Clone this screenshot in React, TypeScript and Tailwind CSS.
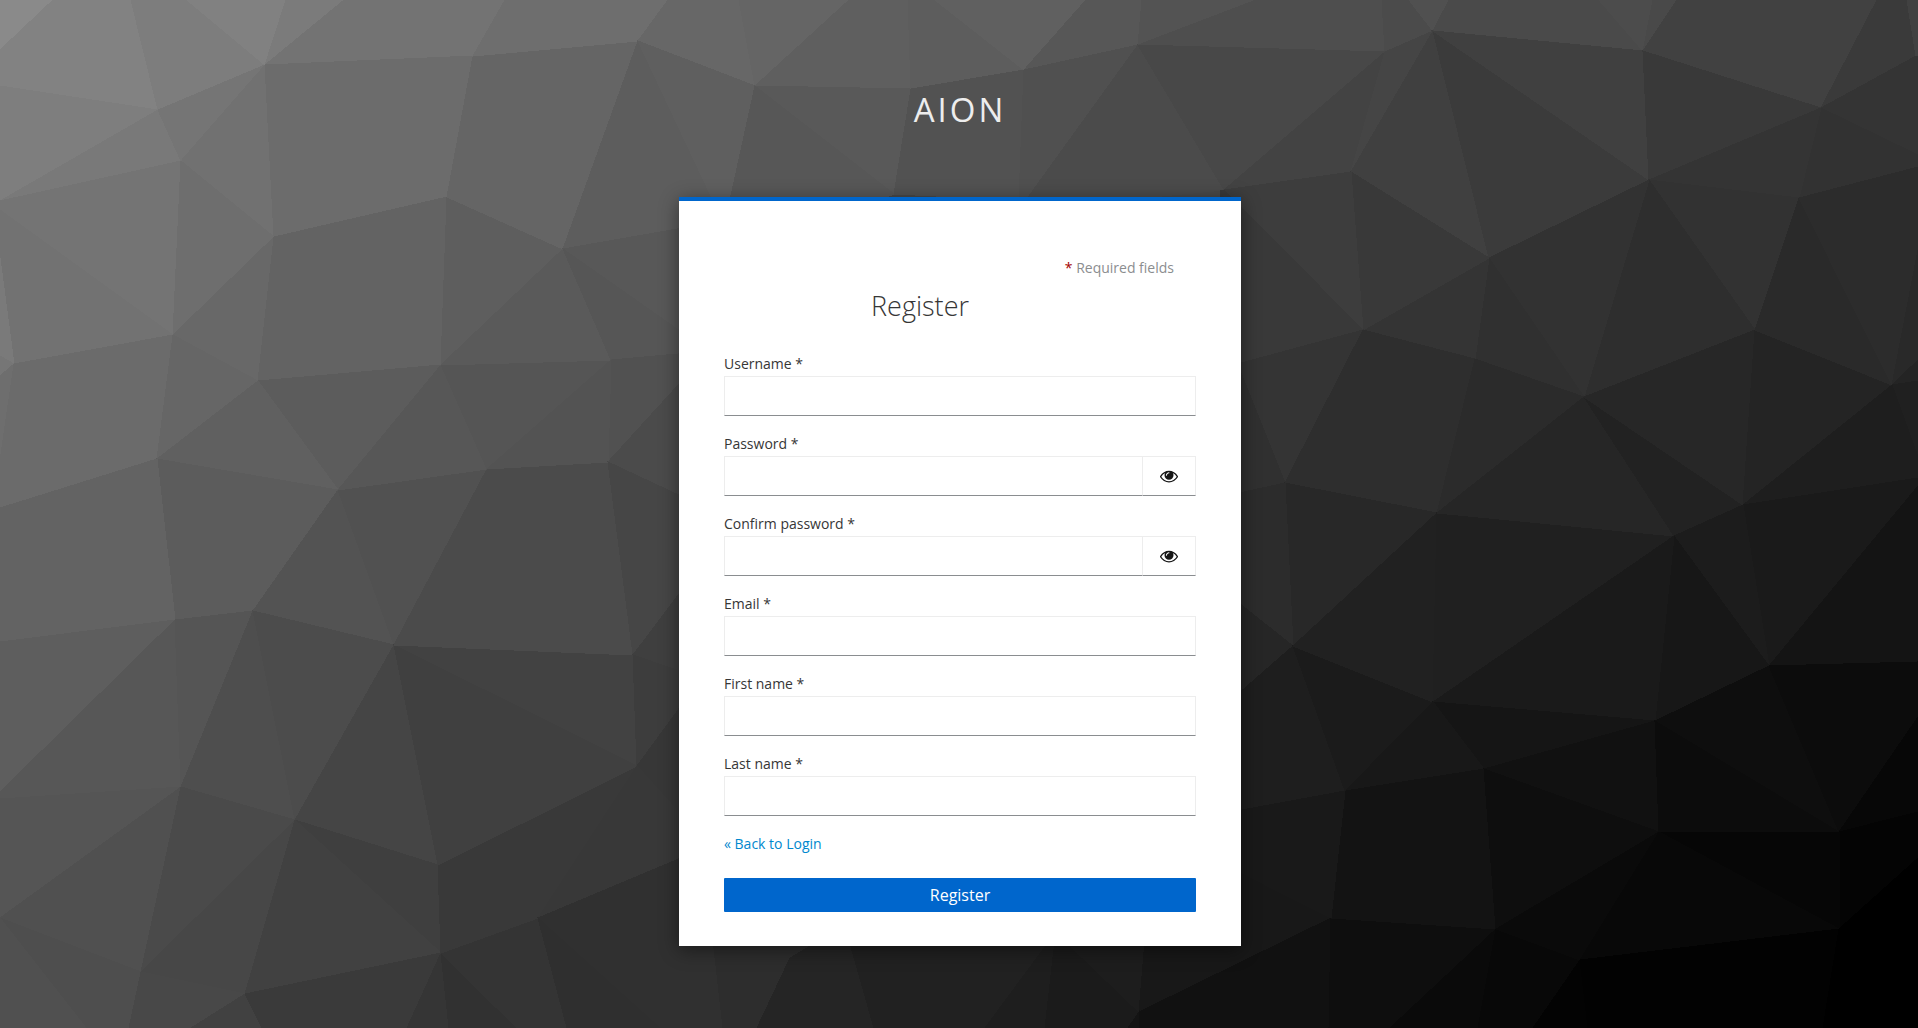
import React, { useState } from 'react';

// Each facet: grey fill followed by the polygon points
const FACETS: [string, string][] = [
  ['#494949', '890,190 1240,190 1240,220 860,220'],
  ['#8a8a8a', '0,0 53,0 0,50'],
  ['#828282', '53,0 131,0 158,110 0,86 0,50'],
  ['#7d7d7d', '131,0 187,0 265,65 158,110'],
  ['#818181', '187,0 286,0 265,65'],
  ['#7b7b7b', '286,0 344,0 265,65'],
  ['#737373', '344,0 505,0 473,56 265,65'],
  ['#7e7e7e', '0,86 158,110 0,201'],
  ['#797979', '158,110 181,161 0,201'],
  ['#757575', '158,110 265,65 181,161'],
  ['#717171', '265,65 274,237 181,161'],
  ['#747474', '0,201 181,161 173,335 0,210'],
  ['#727272', '0,210 173,335 14,364 0,258'],
  ['#7a7a7a', '0,258 14,364 0,356'],
  ['#767676', '0,356 14,364 0,376'],
  ['#6e6e6e', '0,376 14,364 0,461'],
  ['#6b6b6b', '14,364 173,335 157,459 0,508 0,461'],
  ['#6c6c6c', '265,65 473,56 447,197 274,237'],
  ['#6e6e6e', '181,161 274,237 173,335'],
  ['#686868', '173,335 274,237 258,381'],
  ['#666666', '173,335 258,381 157,459'],
  ['#636363', '274,237 447,197 441,365 258,381'],
  ['#5c5c5c', '258,381 441,365 338,490'],
  ['#606060', '258,381 338,490 157,459'],
  ['#5c5c5c', '157,459 338,490 253,611 175,620'],
  ['#636363', '0,508 157,459 175,620 0,642'],
  ['#5e5e5e', '0,642 175,620 0,792'],
  ['#575757', '0,792 175,620 181,787 0,799'],
  ['#555555', '175,620 253,611 181,787'],
  ['#555555', '0,799 181,787 0,918'],
  ['#505050', '181,787 141,972 0,918'],
  ['#4e4e4e', '0,918 141,972 129,1028 86,1028'],
  ['#505050', '0,918 86,1028 0,1028'],
  ['#535353', '338,490 394,645 253,611'],
  ['#515151', '338,490 487,469 394,645'],
  ['#4e4e4e', '253,611 295,820 181,787'],
  ['#4c4c4c', '253,611 394,645 295,820'],
  ['#4a4a4a', '181,787 295,820 141,972'],
  ['#474747', '141,972 295,820 245,994'],
  ['#484848', '141,972 245,994 191,1028 129,1028'],
  ['#414141', '245,994 262,1028 191,1028'],
  ['#454545', '394,645 438,865 295,820'],
  ['#3f3f3f', '295,820 438,865 441,953'],
  ['#414141', '295,820 441,953 245,994'],
  ['#3a3a3a', '245,994 441,953 407,1028 262,1028'],
  ['#353535', '441,953 449,1028 407,1028'],
  ['#313131', '441,953 517,1028 449,1028'],
  ['#343434', '441,953 538,918 567,1028 517,1028'],
  ['#393939', '438,865 637,766 538,918 441,953'],
  ['#424242', '394,645 633,655 637,766'],
  ['#404040', '394,645 637,766 438,865'],
  ['#4b4b4b', '487,469 608,462 633,655 394,645'],
  ['#575757', '441,365 487,469 338,490'],
  ['#555555', '441,365 611,360 487,469'],
  ['#5e5e5e', '447,197 563,249 441,365'],
  ['#5a5a5a', '441,365 563,249 611,360'],
  ['#656565', '473,56 638,41 563,249 447,197'],
  ['#6e6e6e', '505,0 668,0 638,41 473,56'],
  ['#676767', '668,0 739,0 755,86 638,41'],
  ['#656565', '739,0 849,0 755,86'],
  ['#5d5d5d', '638,41 563,249 850,198 712,198'],
  ['#5f5f5f', '638,41 755,86 731,198 712,198'],
  ['#5f5f5f', '849,0 908,0 911,89 755,86'],
  ['#595959', '755,86 911,89 894,194'],
  ['#575757', '755,86 894,194 880,200 730,200'],
  ['#585858', '563,249 700,225 700,345'],
  ['#565656', '563,249 700,345 700,352 611,360'],
  ['#515151', '611,360 700,352 700,361 608,462'],
  ['#535353', '611,360 608,462 487,469'],
  ['#4b4b4b', '608,462 700,361 700,505'],
  ['#464646', '608,462 700,505 700,566 633,655'],
  ['#3f3f3f', '633,655 700,566 700,678'],
  ['#3d3d3d', '633,655 700,678 700,680 637,766'],
  ['#373737', '637,766 700,680 700,836'],
  ['#383838', '637,766 700,836 700,850 538,918'],
  ['#303030', '538,918 700,850 714,940 723,1028 660,1028'],
  ['#2f2f2f', '538,918 660,1028 567,1028'],
  ['#2d2d2d', '713,940 820,940 790,958 757,1028 723,1028'],
  ['#252525', '820,940 790,958 757,1028 874,1028 849,940'],
  ['#212121', '849,940 1050,940 985,1028 874,1028'],
  ['#1e1e1e', '1050,940 1055,940 1045,1028 985,1028'],
  ['#1b1b1b', '1055,940 1064,940 1139,1012 1128,1028 1045,1028'],
  ['#1d1d1d', '1064,940 1145,940 1139,1012'],
  ['#181818', '1145,940 1220,862 1331,918 1139,1012'],
  ['#141414', '1139,1012 1139,1028 1128,1028'],
  ['#111111', '1139,1012 1331,918 1329,1028 1139,1028'],
  ['#0e0e0e', '1331,918 1496,929 1390,1028 1329,1028'],
  ['#0a0a0a', '1496,929 1478,1028 1390,1028'],
  ['#080808', '1496,929 1580,960 1533,1028 1478,1028'],
  ['#5d5d5d', '908,0 935,0 1024,70 911,89'],
  ['#606060', '935,0 1086,0 1024,70'],
  ['#575757', '1086,0 1142,0 1138,45 1024,70'],
  ['#535353', '1142,0 1256,0 1138,45'],
  ['#4e4e4e', '1256,0 1382,0 1385,52 1138,45'],
  ['#4b4b4b', '1382,0 1409,0 1433,31 1385,52'],
  ['#505050', '1409,0 1449,0 1433,31'],
  ['#4a4a4a', '1449,0 1599,0 1643,51 1433,31'],
  ['#4c4c4c', '1599,0 1653,0 1643,51'],
  ['#494949', '1653,0 1677,0 1643,51'],
  ['#414141', '1677,0 1877,0 1821,108 1643,51'],
  ['#3a3a3a', '1877,0 1907,0 1916,56 1821,108'],
  ['#414141', '1907,0 1918,0 1918,56 1916,56'],
  ['#525252', '911,89 1024,70 1019,200 894,194'],
  ['#505050', '1024,70 1138,45 1026,200 1019,200'],
  ['#4b4b4b', '1138,45 1224,190 1120,200 1026,200'],
  ['#484848', '1138,45 1385,52 1224,190'],
  ['#434343', '1385,52 1351,172 1224,190'],
  ['#454545', '1385,52 1433,31 1351,172'],
  ['#404040', '1433,31 1489,258 1351,172'],
  ['#3b3b3b', '1433,31 1649,180 1489,258'],
  ['#404040', '1433,31 1643,51 1649,180'],
  ['#393939', '1643,51 1821,108 1649,180'],
  ['#343434', '1821,108 1916,56 1918,56 1918,155'],
  ['#323232', '1821,108 1918,155 1918,167 1799,198'],
  ['#343434', '1821,108 1799,198 1649,180'],
  ['#323232', '1649,180 1799,198 1755,330'],
  ['#2e2e2e', '1649,180 1755,330 1584,397'],
  ['#323232', '1489,258 1649,180 1584,397'],
  ['#303030', '1489,258 1584,397 1475,359'],
  ['#343434', '1489,258 1475,359 1363,330'],
  ['#393939', '1351,172 1489,258 1363,330'],
  ['#3d3d3d', '1224,190 1351,172 1363,330'],
  ['#393939', '1224,190 1363,330 1220,369 1220,190'],
  ['#343434', '1363,330 1285,483 1230,350 1230,366'],
  ['#303030', '1230,345 1285,483 1230,495'],
  ['#2e2e2e', '1363,330 1475,359 1437,513 1285,483'],
  ['#2b2b2b', '1475,359 1584,397 1437,513'],
  ['#282828', '1285,483 1437,513 1293,646'],
  ['#2c2c2c', '1285,483 1293,646 1230,596 1230,495'],
  ['#262626', '1230,596 1293,646 1230,701'],
  ['#1e1e1e', '1293,646 1345,791 1230,812 1230,701'],
  ['#1b1b1b', '1293,646 1433,702 1345,791'],
  ['#212121', '1437,513 1433,702 1293,646'],
  ['#202020', '1437,513 1674,536 1433,702'],
  ['#262626', '1584,397 1674,536 1437,513'],
  ['#222222', '1584,397 1743,505 1674,536'],
  ['#272727', '1584,397 1755,330 1743,505'],
  ['#242424', '1755,330 1892,385 1743,505'],
  ['#2a2a2a', '1755,330 1799,198 1892,385'],
  ['#2c2c2c', '1799,198 1918,167 1918,250 1892,385'],
  ['#292929', '1892,385 1918,250 1918,360'],
  ['#242424', '1892,385 1918,360 1918,381'],
  ['#202020', '1892,385 1918,381 1918,457'],
  ['#1e1e1e', '1892,385 1918,457 1918,478 1743,505'],
  ['#1a1a1a', '1743,505 1918,478 1918,486 1769,666'],
  ['#1c1c1c', '1743,505 1769,666 1674,536'],
  ['#141414', '1918,486 1918,662 1769,666'],
  ['#171717', '1674,536 1769,666 1655,721'],
  ['#1a1a1a', '1674,536 1655,721 1433,702'],
  ['#151515', '1433,702 1655,721 1484,769'],
  ['#181818', '1433,702 1484,769 1345,791'],
  ['#131313', '1345,791 1484,769 1496,929 1331,918'],
  ['#191919', '1345,791 1331,918 1220,862 1220,814'],
  ['#111111', '1655,721 1659,832 1484,769'],
  ['#0e0e0e', '1484,769 1659,832 1496,929'],
  ['#0a0a0a', '1496,929 1659,832 1580,960'],
  ['#0e0e0e', '1655,721 1769,666 1839,832'],
  ['#0c0c0c', '1655,721 1839,832 1659,832'],
  ['#0c0c0c', '1769,666 1918,662 1918,717 1839,832'],
  ['#070707', '1918,717 1918,812 1839,832'],
  ['#040404', '1839,832 1918,812 1918,858 1839,929'],
  ['#060606', '1659,832 1839,832 1839,929'],
  ['#080808', '1659,832 1839,929 1580,960'],
  ['#030303', '1580,960 1588,1028 1533,1028'],
  ['#020202', '1580,960 1839,929 1823,1028 1588,1028'],
  ['#000000', '1839,929 1918,858 1918,1028 1823,1028'],
];

const PolyBackground: React.FC = () => (
  <svg
    className="absolute inset-0 w-full h-full"
    viewBox="0 0 1918 1028"
    preserveAspectRatio="xMidYMid slice"
    shapeRendering="crispEdges"
    aria-hidden="true"
  >
    {FACETS.map(([fill, points], i) => (
      <polygon key={i} points={points} fill={fill} stroke={fill} strokeWidth="1" />
    ))}
  </svg>
);

const EyeIcon: React.FC = () => (
  <svg className="w-[18px] h-[18px]" viewBox="0 0 1792 1792" fill="currentColor" aria-hidden="true">
    <path d="M1664 960q-152-236-381-353 61 104 61 225 0 185-131.5 316.5t-316.5 131.5-316.5-131.5-131.5-316.5q0-121 61-225-229 117-381 353 133 205 333.5 326.5t434.5 121.5 434.5-121.5 333.5-326.5zm-720-384q0-20-14-34t-34-14q-125 0-214.5 89.5t-89.5 214.5q0 20 14 34t34 14 34-14 14-34q0-86 61-147t147-61q20 0 34-14t14-34zm848 384q0 34-20 69-140 230-376.5 368.5t-499.5 138.5-499.5-139-376.5-368q-20-35-20-69t20-69q140-229 376.5-368t499.5-139 499.5 139 376.5 368q20 35 20 69z" />
  </svg>
);

interface FieldProps {
  id: string;
  label: string;
  type?: string;
}

const inputClass =
  'h-10 min-w-0 flex-1 border border-[#ededed] border-b-[#8a8d90] bg-white px-2 text-base text-[#151515] outline-none';

const Field: React.FC<FieldProps> = ({ id, label, type = 'text' }) => {
  const [visible, setVisible] = useState(false);
  const isPassword = type === 'password';

  return (
    <div className="flex flex-col">
      <label htmlFor={id} className="text-sm leading-6 text-[#363636]">
        {label} *
      </label>
      <div className="flex">
        <input id={id} name={id} type={isPassword && visible ? 'text' : type} className={inputClass} />
        {isPassword && (
          <button
            type="button"
            aria-label="Show password"
            onClick={() => setVisible(!visible)}
            className="h-10 w-[53px] flex items-center justify-center border border-l-0 border-[#ededed] border-b-[#8a8d90] text-[#151515]"
          >
            <EyeIcon />
          </button>
        )}
      </div>
    </div>
  );
};

const App: React.FC = () => {
  return (
    <div className="relative min-h-screen overflow-hidden bg-[#222] font-['Open_Sans',sans-serif]">
      <PolyBackground />
      <div className="relative flex flex-col items-center pl-0.5">
        <header className="pt-[90px] pb-[67px] text-[33px] leading-10 tracking-[3px] uppercase text-[#ededed]">
          AION
        </header>

        <main className="w-full max-w-[562px] border-t-4 border-[#06c] bg-white px-[45px] pt-14 pb-[34px] shadow-[0_4px_18px_rgba(0,0,0,0.45)]">
          <div className="pr-[22px] text-right text-sm leading-[22px] text-[#8b8d8f]">
            <span className="text-[#a30000]">*</span> Required fields
          </div>
          <h1 className="pt-2 pr-20 text-center text-[27px] leading-[38px] font-light text-[#363636]">Register</h1>

          <form className="pt-[27px] flex flex-col gap-4" onSubmit={(e) => e.preventDefault()}>
            <Field id="username" label="Username" />
            <Field id="password" label="Password" type="password" />
            <Field id="password-confirm" label="Confirm password" type="password" />
            <Field id="email" label="Email" />
            <Field id="firstName" label="First name" />
            <Field id="lastName" label="Last name" />

            <a href="#login" className="self-start text-sm leading-6 text-[#0088ce]">
              « Back to Login
            </a>
            <button type="submit" className="mt-1.5 h-[34px] rounded-[1px] bg-[#06c] text-base text-white">
              Register
            </button>
          </form>
        </main>
      </div>
    </div>
  );
};

export default App;
